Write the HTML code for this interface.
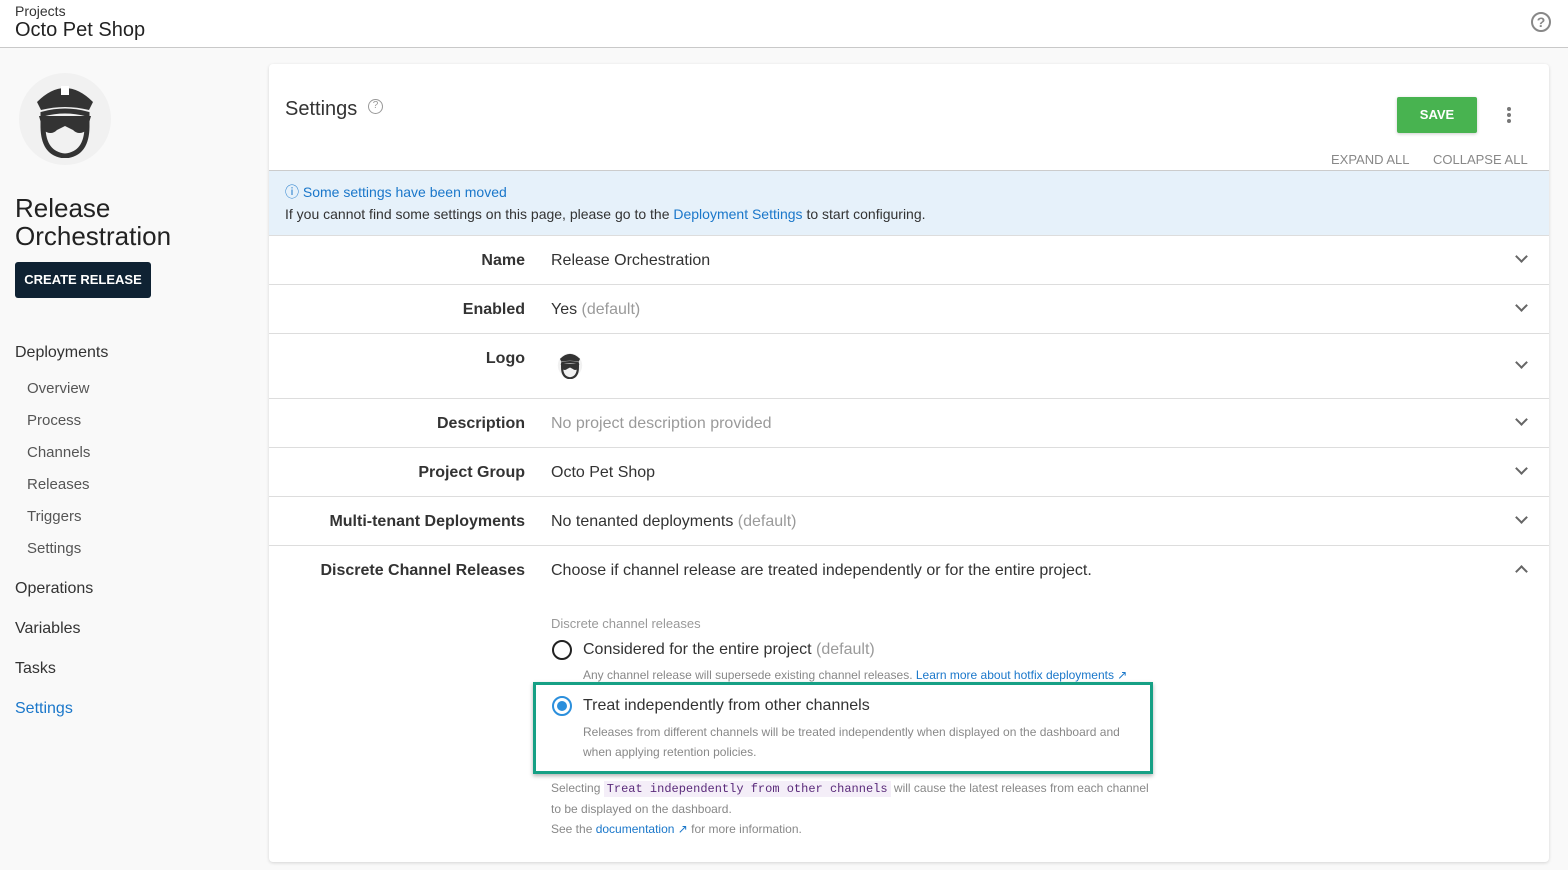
<!DOCTYPE html><html><head><style>
*{box-sizing:border-box;margin:0;padding:0}
body{width:1568px;height:870px;overflow:hidden;background:#f9f9f9;font-family:"Liberation Sans",sans-serif;color:#333;position:relative}
.top{position:absolute;left:0;top:0;width:1568px;height:48px;background:#fff;border-bottom:1px solid #c9c9c9}
.abs{position:absolute;white-space:nowrap}
.card{position:absolute;left:269px;top:64px;width:1280px;height:798px;background:#fff;border-radius:4px;box-shadow:0 1px 3px rgba(0,0,0,.15)}
.row{position:absolute;left:0;width:1280px;border-top:1px solid #ddd}
.lab{position:absolute;right:1024px;font-weight:bold;font-size:16px;color:#333;white-space:nowrap}
.val{position:absolute;left:282px;font-size:16px;color:#333;white-space:nowrap}
.chev{position:absolute;right:23px;width:9px;height:9px;border-right:2px solid #666;border-bottom:2px solid #666;transform:rotate(45deg)}
.nav{position:absolute;left:15px;font-size:16px;color:#333}
.sub{position:absolute;left:27px;font-size:15px;color:#555}
.g{color:#9a9a9a}
a{color:#1a77ca;text-decoration:none}
</style></head><body>
<div class="top">
<div class="abs" style="left:15px;top:3px;font-size:14px;color:#333">Projects</div>
<div class="abs" style="left:15px;top:19px;font-size:20px;color:#222">Octo Pet Shop</div>
<div class="abs" style="left:1531px;top:12px;width:20px;height:20px;border:2px solid #888;border-radius:50%;font-size:14px;color:#888;text-align:center;line-height:16px;font-weight:bold">?</div>
</div>
<div class="abs" style="left:19px;top:73px;width:92px;height:92px;border-radius:50%;background:#f1f1f1"></div>
<svg class="abs" style="left:33px;top:80px" width="64" height="78" viewBox="0 0 64 78">
<path d="M4 22 Q32 -6 60 22 L56 30 Q32 24 8 30Z" fill="#333"/>
<rect x="28" y="6" width="8" height="9" fill="#fff"/>
<path d="M10 34 Q32 28 54 34 L54 46 Q54 74 32 76 Q10 74 10 46Z" fill="none" stroke="#333" stroke-width="5"/>
<path d="M6 36 L58 36 L54 50 Q46 56 40 50 L32 46 L24 50 Q18 56 10 50Z" fill="#333"/>
</svg>
<div class="abs" style="left:15px;top:194px;font-size:26px;line-height:28px;color:#222">Release<br>Orchestration</div>
<div class="abs" style="left:15px;top:262px;width:136px;height:36px;background:#0f2233;border-radius:3px;color:#fff;font-size:13px;font-weight:bold;text-align:center;line-height:36px">CREATE RELEASE</div>
<div class="nav" style="top:344px">Deployments</div>
<div class="sub" style="top:380px">Overview</div>
<div class="sub" style="top:412px">Process</div>
<div class="sub" style="top:444px">Channels</div>
<div class="sub" style="top:476px">Releases</div>
<div class="sub" style="top:508px">Triggers</div>
<div class="sub" style="top:540px">Settings</div>
<div class="nav" style="top:580px">Operations</div>
<div class="nav" style="top:620px">Variables</div>
<div class="nav" style="top:660px">Tasks</div>
<div class="nav" style="top:700px;color:#1a77ca">Settings</div>

<div class="card">
<div class="abs" style="left:16px;top:34px;font-size:20px;color:#333">Settings</div>
<div class="abs" style="left:99px;top:35px;width:15px;height:15px;border:1.5px solid #999;border-radius:50%;font-size:10px;color:#999;text-align:center;line-height:12px">?</div>
<div class="abs" style="left:1128px;top:33px;width:80px;height:36px;background:#48b350;color:#fff;font-weight:bold;font-size:13px;text-align:center;line-height:36px;border-radius:2px;box-shadow:0 1px 3px rgba(0,0,0,.2)">SAVE</div>
<div class="abs" style="left:1238px;top:43px;width:4px;height:4px;background:#777;border-radius:50%;box-shadow:0 6px 0 #777,0 12px 0 #777"></div>
<div class="abs" style="left:1062px;top:88px;font-size:13px;color:#888">EXPAND ALL</div>
<div class="abs" style="left:1164px;top:88px;font-size:13px;color:#888">COLLAPSE ALL</div>
<div class="row" style="top:106px;height:66px;background:#e6f1fa;border-top:1px solid #ccc">
<div class="abs" style="left:16px;top:11px;font-size:14px;color:#1a77ca">&#9432; Some settings have been moved</div>
<div class="abs" style="left:16px;top:35px;font-size:14px;color:#333">If you cannot find some settings on this page, please go to the <a>Deployment Settings</a> to start configuring.</div>
</div>
<div class="row" style="top:171px;height:49px"><div class="lab" style="top:16px">Name</div><div class="val" style="top:16px">Release Orchestration</div><div class="chev" style="top:16px"></div></div>
<div class="row" style="top:220px;height:49px"><div class="lab" style="top:16px">Enabled</div><div class="val" style="top:16px">Yes <span class="g">(default)</span></div><div class="chev" style="top:16px"></div></div>
<div class="row" style="top:269px;height:65px"><div class="lab" style="top:16px">Logo</div>
<svg class="abs" style="left:288px;top:17px" width="26" height="28" viewBox="0 0 64 78"><circle cx="32" cy="40" r="34" fill="#f1f1f1"/><path d="M4 22 Q32 -6 60 22 L56 30 Q32 24 8 30Z" fill="#333"/><path d="M10 34 Q32 28 54 34 L54 46 Q54 74 32 76 Q10 74 10 46Z" fill="none" stroke="#333" stroke-width="6"/><path d="M6 36 L58 36 L54 50 Q46 56 40 50 L32 46 L24 50 Q18 56 10 50Z" fill="#333"/></svg>
<div class="chev" style="top:24px"></div></div>
<div class="row" style="top:334px;height:49px"><div class="lab" style="top:16px">Description</div><div class="val g" style="top:16px">No project description provided</div><div class="chev" style="top:16px"></div></div>
<div class="row" style="top:383px;height:49px"><div class="lab" style="top:16px">Project Group</div><div class="val" style="top:16px">Octo Pet Shop</div><div class="chev" style="top:16px"></div></div>
<div class="row" style="top:432px;height:49px"><div class="lab" style="top:16px">Multi-tenant Deployments</div><div class="val" style="top:16px">No tenanted deployments <span class="g">(default)</span></div><div class="chev" style="top:16px"></div></div>
<div class="row" style="top:481px;height:317px"><div class="lab" style="top:16px">Discrete Channel Releases</div><div class="val" style="top:16px">Choose if channel release are treated independently or for the entire project.</div><div class="chev" style="top:21px;transform:rotate(-135deg)"></div>
<div class="abs" style="left:282px;top:70px;font-size:13px;color:#999">Discrete channel releases</div>
<div class="abs" style="left:283px;top:94px;width:20px;height:20px;border:2px solid #222;border-radius:50%"></div>
<div class="abs" style="left:314px;top:95px;font-size:16px;color:#333">Considered for the entire project <span class="g">(default)</span></div>
<div class="abs" style="left:314px;top:122px;font-size:12px;color:#888">Any channel release will supersede existing channel releases. <a>Learn more about hotfix deployments &#8599;</a></div>
<div class="abs" style="left:264px;top:136px;width:620px;height:92px;border:3px solid #16a085;box-shadow:0 2px 4px rgba(0,0,0,.3)"></div>
<div class="abs" style="left:283px;top:150px;width:20px;height:20px;border:2px solid #2b8fdc;border-radius:50%"><div style="margin:3px;width:10px;height:10px;border-radius:50%;background:#2b8fdc"></div></div>
<div class="abs" style="left:314px;top:151px;font-size:16px;color:#333">Treat independently from other channels</div>
<div class="abs" style="left:314px;top:176px;font-size:12px;color:#888;line-height:20px">Releases from different channels will be treated independently when displayed on the dashboard and<br>when applying retention policies.</div>
<div class="abs" style="left:282px;top:232px;font-size:12px;color:#888;line-height:20px">Selecting <span style="font-family:'Liberation Mono',monospace;color:#5a2a7a;background:#f4eef8;padding:1px 3px">Treat independently from other channels</span> will cause the latest releases from each channel<br>to be displayed on the dashboard.<br>See the <a>documentation &#8599;</a> for more information.</div>
</div>
</div>
</body></html>
